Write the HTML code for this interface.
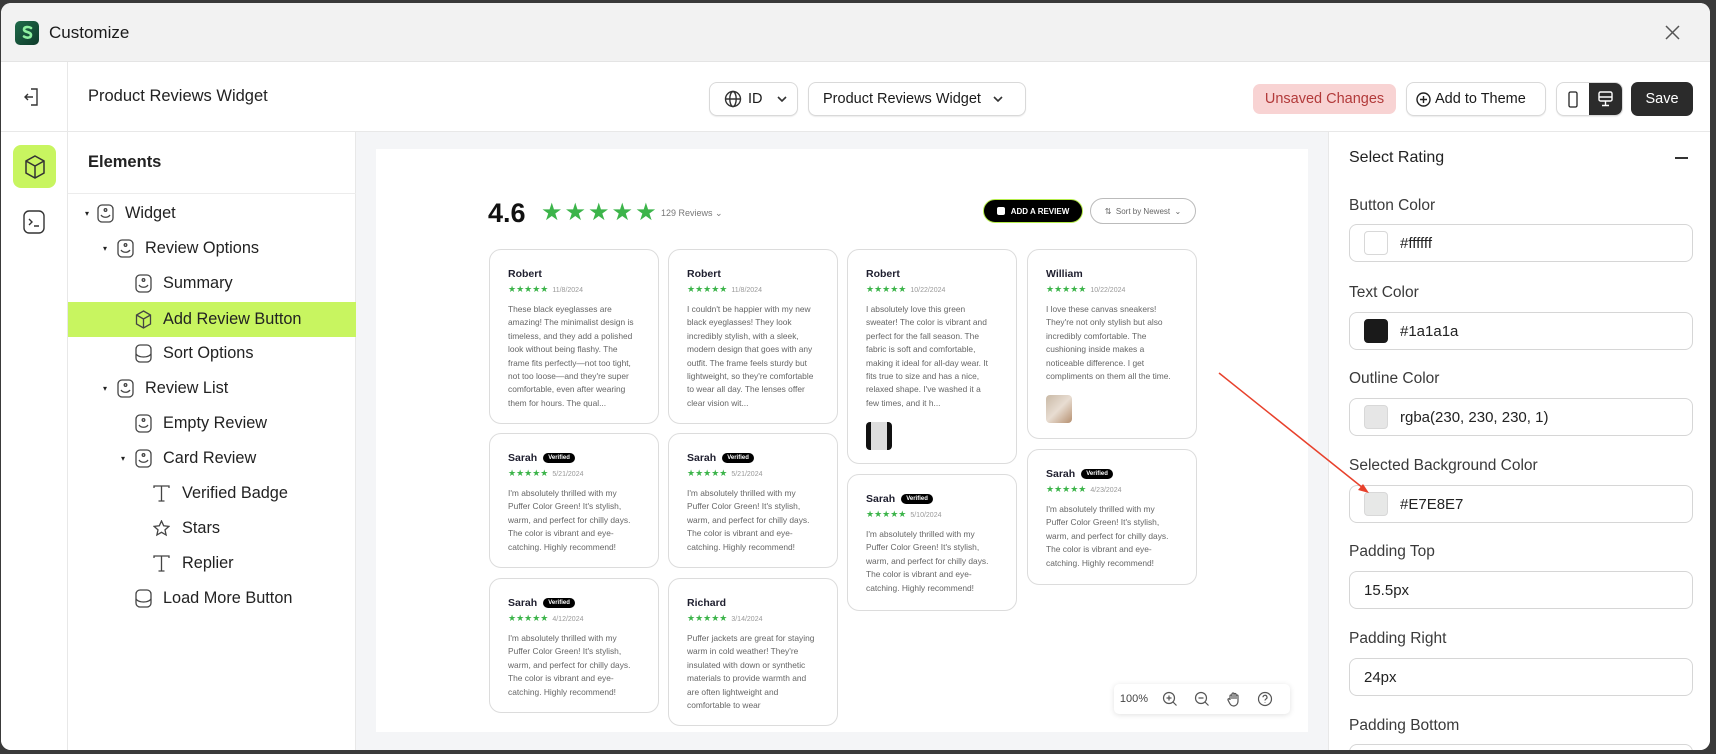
<!DOCTYPE html>
<html><head><meta charset="utf-8">
<style>
*{box-sizing:border-box;margin:0;padding:0}
body{width:1716px;height:754px;overflow:hidden;background:#3a3a3a;font-family:"Liberation Sans",sans-serif;color:#1a1a1a;position:relative}
.win{position:absolute;left:1px;top:3px;width:1709px;height:747px;background:#fff;border-radius:10px;overflow:hidden}
.abs{position:absolute}
.title{left:0;top:0;width:100%;height:59px;background:#f2f2f2;border-bottom:1px solid #e4e4e4}
.hdr{left:0;top:59px;width:100%;height:70px;background:#fff;border-bottom:1px solid #e8e8e8}
.rail{left:0;top:129px;width:67px;height:620px;border-right:1px solid #e8e8e8;background:#fff}
.hrail{left:0;top:59px;width:67px;height:70px;border-right:1px solid #e8e8e8}
.tree{left:67px;top:129px;width:288px;height:620px;border-right:1px solid #e8e8e8;background:#fff}
.canvas{left:355px;top:129px;width:972px;height:620px;background:#f4f5f7}
.preview{left:20px;top:17px;width:932px;height:583px;background:#fff}
.right{left:1327px;top:129px;width:382px;height:620px;background:#fff;border-left:1px solid #e8e8e8}
.btn{position:absolute;border:1px solid #d9d9d9;border-radius:8px;background:#fff;font-size:14.5px;display:flex;align-items:center;box-shadow:0 1px 1px rgba(0,0,0,.08)}
.row{position:absolute;left:0;width:288px;height:35px;display:flex;align-items:center;font-size:16.3px;color:#222}
.row svg{flex:none}
.lbl{position:absolute;left:20px;font-size:15.5px;color:#3a3a3a}
.inp{position:absolute;left:20px;width:344px;height:38px;border:1px solid #d6d6d6;border-radius:8px;background:#fff;display:flex;align-items:center;font-size:15px;color:#222}
.sw{width:24px;height:24px;border-radius:4px;border:1px solid #d8d8d8;margin:0 12px 0 14px}
.card{position:absolute;width:170px;border:1px solid #dcdcdc;border-radius:12px;background:#fff;padding:17px 0 0 18px}
.nm{font-size:10.5px;font-weight:bold;color:#1e1e2e;height:14px;display:flex;align-items:center}
.vb{display:inline-block;background:#000;color:#fff;font-size:6px;border-radius:7px;padding:2px 5px;margin-left:6px;font-weight:bold}
.st{font-size:9px;color:#3cb44a;margin-top:3px;height:14px}
.st span{font-size:7px;color:#999;margin-left:4px}
.tx{font-size:8.4px;color:#666;line-height:13.4px;margin-top:5px;width:130px}
.thumb{width:26px;height:28px;border-radius:4px;margin-top:12px}
</style></head><body>
<div class="win">
 <div class="abs title">
  <div class="abs" style="left:14px;top:18px;width:24px;height:24px;border-radius:5px;background:linear-gradient(135deg,#1f6b4a,#0f3b2a)"><svg width="24" height="24" viewBox="0 0 24 24"><path d="M16 7c-2-1.5-7-1.5-7 1.5s7 2 7 5.5-5 3-7 1.5" stroke="#8ef0a0" stroke-width="2.6" fill="none" stroke-linecap="round"/></svg></div>
  <div class="abs" style="left:48px;top:20px;font-size:17px;color:#1a1a1a">Customize</div>
  <svg class="abs" style="left:1664px;top:22px" width="15" height="15" viewBox="0 0 15 15"><path d="M1 1L14 14M14 1L1 14" stroke="#555" stroke-width="1.5"/></svg>
 </div>
 <div class="abs hdr">
  <div class="abs" style="left:87px;top:25px;font-size:16.5px;color:#222">Product Reviews Widget</div>
  <div class="btn" style="left:708px;top:20px;width:89px;height:34px;padding-left:14px"><svg width="18" height="18" viewBox="0 0 18 18" fill="none" stroke="#333" stroke-width="1.4"><circle cx="9" cy="9" r="7.5"/><ellipse cx="9" cy="9" rx="3.2" ry="7.5"/><path d="M1.5 9h15"/></svg><span style="margin-left:6px">ID</span><svg style="margin-left:14px" width="10" height="6" viewBox="0 0 10 6"><path d="M1 1l4 4 4-4" stroke="#333" stroke-width="1.6" fill="none"/></svg></div>
  <div class="btn" style="left:807px;top:20px;width:218px;height:34px;padding-left:14px">Product Reviews Widget<svg style="margin-left:12px" width="10" height="6" viewBox="0 0 10 6"><path d="M1 1l4 4 4-4" stroke="#333" stroke-width="1.6" fill="none"/></svg></div>
  <div class="abs" style="left:1252px;top:22px;width:143px;height:30px;border-radius:7px;background:#f8d3d3;color:#b23a3a;font-size:14.5px;display:flex;align-items:center;justify-content:center">Unsaved Changes</div>
  <div class="btn" style="left:1405px;top:20px;width:140px;height:34px;padding-left:9px"><svg width="15" height="15" viewBox="0 0 15 15" fill="none" stroke="#222" stroke-width="1.4"><circle cx="7.5" cy="7.5" r="6.5"/><path d="M7.5 4v7M4 7.5h7"/></svg><span style="margin-left:4px">Add to Theme</span></div>
  <div class="btn" style="left:1555px;top:20px;width:67px;height:34px;overflow:hidden"><div style="width:33px;height:34px;display:flex;align-items:center;justify-content:center"><svg width="10" height="17" viewBox="0 0 10 17" fill="none" stroke="#222" stroke-width="1.3"><rect x="1" y="1" width="8" height="15" rx="1.5"/></svg></div><div style="width:34px;height:34px;background:#2b2b2b;display:flex;align-items:center;justify-content:center"><svg width="15" height="16" viewBox="0 0 15 16" fill="none" stroke="#fff" stroke-width="1.4"><rect x="1" y="1" width="13" height="9" rx="1.5"/><path d="M1 6h13M7.5 10v4M4 14.5h7"/></svg></div></div>
  <div class="abs" style="left:1630px;top:20px;width:62px;height:34px;border-radius:7px;background:#2b2b2b;color:#fff;font-size:14.5px;display:flex;align-items:center;justify-content:center">Save</div>
 </div>
 <div class="abs hrail"><svg class="abs" style="left:23px;top:26px" width="16" height="18" viewBox="0 0 16 18" fill="none" stroke="#333" stroke-width="1.4"><path d="M7 1h6v16H7M1 9h8M4 6l-3 3 3 3"/></svg></div>
 <div class="abs rail">
  <div class="abs" style="left:12px;top:13px;width:43px;height:43px;border-radius:8px;background:#c8f560;display:flex;align-items:center;justify-content:center"><svg width="22" height="24" viewBox="0 0 22 24" fill="none" stroke="#333" stroke-width="1.5"><path d="M11 1l9 5v12l-9 5-9-5V6z M2 6l9 5 9-5 M11 11v12"/></svg></div>
  <svg class="abs" style="left:22px;top:78px" width="22" height="24" viewBox="0 0 22 24" fill="none" stroke="#333" stroke-width="1.4"><rect x="1" y="1" width="20" height="22" rx="5"/><path d="M6 9l3 3-3 3M11 16h5"/></svg>
 </div>
 <div class="abs tree">
  <div class="abs" style="left:20px;top:21px;font-size:16.5px;font-weight:bold;color:#222">Elements</div>
  <div class="abs" style="left:0;top:61px;width:288px;height:1px;background:#ececec"></div>
  <div class="row" style="top:64px"><span style="margin-left:17px;font-size:8px">▾</span><svg style="margin-left:8px" width="17" height="19" viewBox="0 0 17 19" fill="none" stroke="#444" stroke-width="1.3"><rect x="1" y="1" width="15" height="17" rx="4"/><circle cx="8.5" cy="6" r="1.3"/><path d="M4 11c2 3 7 3 9 0"/></svg><span style="margin-left:11px">Widget</span></div>
  <div class="row" style="top:99px"><span style="margin-left:35px;font-size:8px">▾</span><svg style="margin-left:10px" width="17" height="19" viewBox="0 0 17 19" fill="none" stroke="#444" stroke-width="1.3"><rect x="1" y="1" width="15" height="17" rx="4"/><circle cx="8.5" cy="6" r="1.3"/><path d="M4 11c2 3 7 3 9 0"/></svg><span style="margin-left:11px">Review Options</span></div>
  <div class="row" style="top:134px"><svg style="margin-left:67px" width="17" height="19" viewBox="0 0 17 19" fill="none" stroke="#444" stroke-width="1.3"><rect x="1" y="1" width="15" height="17" rx="4"/><circle cx="8.5" cy="6" r="1.3"/><path d="M4 11c2 3 7 3 9 0"/></svg><span style="margin-left:11px">Summary</span></div>
  <div class="row" style="top:170px;background:#c8f560"><svg style="margin-left:67px" width="17" height="19" viewBox="0 0 17 19" fill="none" stroke="#444" stroke-width="1.3"><path d="M8.5 1l7 4v9l-7 4-7-4V5z M1.5 5l7 4 7-4 M8.5 9v9"/></svg><span style="margin-left:11px">Add Review Button</span></div>
  <div class="row" style="top:204px"><svg style="margin-left:67px" width="17" height="19" viewBox="0 0 17 19" fill="none" stroke="#444" stroke-width="1.3"><rect x="1" y="1" width="15" height="17" rx="4"/><path d="M1 10c3 4 12 4 15 0"/></svg><span style="margin-left:11px">Sort Options</span></div>
  <div class="row" style="top:239px"><span style="margin-left:35px;font-size:8px">▾</span><svg style="margin-left:10px" width="17" height="19" viewBox="0 0 17 19" fill="none" stroke="#444" stroke-width="1.3"><rect x="1" y="1" width="15" height="17" rx="4"/><circle cx="8.5" cy="6" r="1.3"/><path d="M4 11c2 3 7 3 9 0"/></svg><span style="margin-left:11px">Review List</span></div>
  <div class="row" style="top:274px"><svg style="margin-left:67px" width="17" height="19" viewBox="0 0 17 19" fill="none" stroke="#444" stroke-width="1.3"><rect x="1" y="1" width="15" height="17" rx="4"/><circle cx="8.5" cy="6" r="1.3"/><path d="M4 11c2 3 7 3 9 0"/></svg><span style="margin-left:11px">Empty Review</span></div>
  <div class="row" style="top:309px"><span style="margin-left:53px;font-size:8px">▾</span><svg style="margin-left:10px" width="17" height="19" viewBox="0 0 17 19" fill="none" stroke="#444" stroke-width="1.3"><rect x="1" y="1" width="15" height="17" rx="4"/><circle cx="8.5" cy="6" r="1.3"/><path d="M4 11c2 3 7 3 9 0"/></svg><span style="margin-left:11px">Card Review</span></div>
  <div class="row" style="top:344px"><svg style="margin-left:85px" width="17" height="17" viewBox="0 0 17 17" fill="none" stroke="#444" stroke-width="1.3"><path d="M1 3V1h15v2M8.5 1v15M5.5 16h6"/></svg><span style="margin-left:12px">Verified Badge</span></div>
  <div class="row" style="top:379px"><svg style="margin-left:85px" width="17" height="17" viewBox="0 0 17 17" fill="none" stroke="#444" stroke-width="1.3"><path d="M8.5 1l2.2 4.8 5.2.6-3.9 3.5 1.1 5.1-4.6-2.7-4.6 2.7 1.1-5.1L1.1 6.4l5.2-.6z"/></svg><span style="margin-left:12px">Stars</span></div>
  <div class="row" style="top:414px"><svg style="margin-left:85px" width="17" height="17" viewBox="0 0 17 17" fill="none" stroke="#444" stroke-width="1.3"><path d="M1 3V1h15v2M8.5 1v15M5.5 16h6"/></svg><span style="margin-left:12px">Replier</span></div>
  <div class="row" style="top:449px"><svg style="margin-left:67px" width="17" height="19" viewBox="0 0 17 19" fill="none" stroke="#444" stroke-width="1.3"><rect x="1" y="1" width="15" height="17" rx="4"/><path d="M1 10c3 4 12 4 15 0"/></svg><span style="margin-left:11px">Load More Button</span></div>
 </div>
 <div class="abs canvas">
  <div class="abs preview">
   <div class="abs" style="left:112px;top:49px;font-size:27px;font-weight:bold;color:#111">4.6</div>
   <div class="abs" style="left:165px;top:49px;font-size:24px;color:#3cb44a;letter-spacing:2px">★★★★★</div>
   <div class="abs" style="left:285px;top:59px;font-size:9px;color:#777">129 Reviews ⌄</div>
   <div class="abs" style="left:607px;top:50px;width:100px;height:24px;border-radius:12px;background:#000;border:1.5px solid #b5ec4a;color:#fff;font-size:8px;font-weight:bold;display:flex;align-items:center;justify-content:center"><span style="display:inline-block;width:8px;height:8px;background:#fff;border-radius:2px;margin-right:6px"></span>ADD A REVIEW</div>
   <div class="abs" style="left:714px;top:49px;width:106px;height:26px;border-radius:13px;border:1px solid #bbb;color:#666;font-size:8px;display:flex;align-items:center;justify-content:center">⇅ &nbsp;Sort by Newest &nbsp;⌄</div>
   <div class="card" style="left:113px;top:100px;height:175px"><div class="nm">Robert</div><div class="st">★★★★★<span>11/8/2024</span></div><div class="tx">These black eyeglasses are amazing! The minimalist design is timeless, and they add a polished look without being flashy. The frame fits perfectly—not too tight, not too loose—and they're super comfortable, even after wearing them for hours. The qual...</div></div>
   <div class="card" style="left:113px;top:284px;height:135px"><div class="nm">Sarah<span class="vb">Verified</span></div><div class="st">★★★★★<span>5/21/2024</span></div><div class="tx">I'm absolutely thrilled with my Puffer Color Green! It's stylish, warm, and perfect for chilly days. The color is vibrant and eye-catching. Highly recommend!</div></div>
   <div class="card" style="left:113px;top:429px;height:135px"><div class="nm">Sarah<span class="vb">Verified</span></div><div class="st">★★★★★<span>4/12/2024</span></div><div class="tx">I'm absolutely thrilled with my Puffer Color Green! It's stylish, warm, and perfect for chilly days. The color is vibrant and eye-catching. Highly recommend!</div></div>
   <div class="card" style="left:292px;top:100px;height:175px"><div class="nm">Robert</div><div class="st">★★★★★<span>11/8/2024</span></div><div class="tx">I couldn't be happier with my new black eyeglasses! They look incredibly stylish, with a sleek, modern design that goes with any outfit. The frame feels sturdy but lightweight, so they're comfortable to wear all day. The lenses offer clear vision wit...</div></div>
   <div class="card" style="left:292px;top:284px;height:135px"><div class="nm">Sarah<span class="vb">Verified</span></div><div class="st">★★★★★<span>5/21/2024</span></div><div class="tx">I'm absolutely thrilled with my Puffer Color Green! It's stylish, warm, and perfect for chilly days. The color is vibrant and eye-catching. Highly recommend!</div></div>
   <div class="card" style="left:292px;top:429px;height:148px"><div class="nm">Richard</div><div class="st">★★★★★<span>3/14/2024</span></div><div class="tx">Puffer jackets are great for staying warm in cold weather! They're insulated with down or synthetic materials to provide warmth and are often lightweight and comfortable to wear</div></div>
   <div class="card" style="left:471px;top:100px;height:215px"><div class="nm">Robert</div><div class="st">★★★★★<span>10/22/2024</span></div><div class="tx">I absolutely love this green sweater! The color is vibrant and perfect for the fall season. The fabric is soft and comfortable, making it ideal for all-day wear. It fits true to size and has a nice, relaxed shape. I've washed it a few times, and it h...</div><div class="thumb" style="background:linear-gradient(90deg,#111 0 20%,#ddd 20% 80%,#111 80%)"></div></div>
   <div class="card" style="left:471px;top:325px;height:137px"><div class="nm">Sarah<span class="vb">Verified</span></div><div class="st">★★★★★<span>5/10/2024</span></div><div class="tx">I'm absolutely thrilled with my Puffer Color Green! It's stylish, warm, and perfect for chilly days. The color is vibrant and eye-catching. Highly recommend!</div></div>
   <div class="card" style="left:651px;top:100px;height:190px"><div class="nm">William</div><div class="st">★★★★★<span>10/22/2024</span></div><div class="tx">I love these canvas sneakers! They're not only stylish but also incredibly comfortable. The cushioning inside makes a noticeable difference. I get compliments on them all the time.</div><div class="thumb" style="background:linear-gradient(135deg,#c9b9a6,#e8ddd2 50%,#b69070)"></div></div>
   <div class="card" style="left:651px;top:300px;height:136px"><div class="nm">Sarah<span class="vb">Verified</span></div><div class="st">★★★★★<span>4/23/2024</span></div><div class="tx">I'm absolutely thrilled with my Puffer Color Green! It's stylish, warm, and perfect for chilly days. The color is vibrant and eye-catching. Highly recommend!</div></div>
   <div class="abs" style="left:738px;top:535px;width:176px;height:30px;background:#fff;border-radius:5px;box-shadow:0 1px 6px rgba(0,0,0,.12);display:flex;align-items:center;font-size:11px;color:#444">
    <span style="width:40px;text-align:center">100%</span>
    <svg style="margin-left:8px" width="16" height="16" viewBox="0 0 16 16" fill="none" stroke="#555" stroke-width="1.2"><circle cx="7" cy="7" r="5.5"/><path d="M7 4.5v5M4.5 7h5M11 11l3.5 3.5"/></svg>
    <svg style="margin-left:16px" width="16" height="16" viewBox="0 0 16 16" fill="none" stroke="#555" stroke-width="1.2"><circle cx="7" cy="7" r="5.5"/><path d="M4.5 7h5M11 11l3.5 3.5"/></svg>
    <svg style="margin-left:16px" width="16" height="16" viewBox="0 0 16 16" fill="none" stroke="#555" stroke-width="1.2"><path d="M4 9V5a1 1 0 012 0v3V3a1 1 0 012 0v5V3.5a1 1 0 012 0V8 5a1 1 0 012 0v5c0 3-2 5-4.5 5S4 13 3 11L2 9a1 1 0 012-.5"/></svg>
    <svg style="margin-left:15px" width="16" height="16" viewBox="0 0 16 16" fill="none" stroke="#555" stroke-width="1.2"><circle cx="8" cy="8" r="6.5"/><path d="M6 6.3a2 2 0 113 1.7c-.7.4-1 .8-1 1.5M8 11.3v.4"/></svg>
   </div>
  </div>
 </div>
 <div class="abs right">
  <div class="abs" style="left:20px;top:17px;font-size:16px;color:#222">Select Rating</div>
  <div class="abs" style="left:346px;top:25px;width:13px;height:1.5px;background:#333"></div>
  <div class="lbl" style="top:65px">Button Color</div>
  <div class="inp" style="top:92px"><div class="sw" style="background:#fff"></div>#ffffff</div>
  <div class="lbl" style="top:152px">Text Color</div>
  <div class="inp" style="top:180px"><div class="sw" style="background:#1a1a1a;border-color:#1a1a1a"></div>#1a1a1a</div>
  <div class="lbl" style="top:238px">Outline Color</div>
  <div class="inp" style="top:266px"><div class="sw" style="background:#e6e6e6"></div>rgba(230, 230, 230, 1)</div>
  <div class="lbl" style="top:325px">Selected Background Color</div>
  <div class="inp" style="top:353px"><div class="sw" style="background:#e7e8e7"></div>#E7E8E7</div>
  <div class="lbl" style="top:411px">Padding Top</div>
  <div class="inp" style="top:439px;padding-left:14px">15.5px</div>
  <div class="lbl" style="top:498px">Padding Right</div>
  <div class="inp" style="top:526px;padding-left:14px">24px</div>
  <div class="lbl" style="top:585px">Padding Bottom</div>
  <div class="inp" style="top:612px"></div>
 </div>
 <svg class="abs" style="left:0;top:0" width="1709" height="747"><path d="M1218 370L1362 485" stroke="#e8412c" stroke-width="1.5"/><path d="M1368 490l-11-3 5-6z" fill="#e8412c"/></svg>
</div>
</body></html>
